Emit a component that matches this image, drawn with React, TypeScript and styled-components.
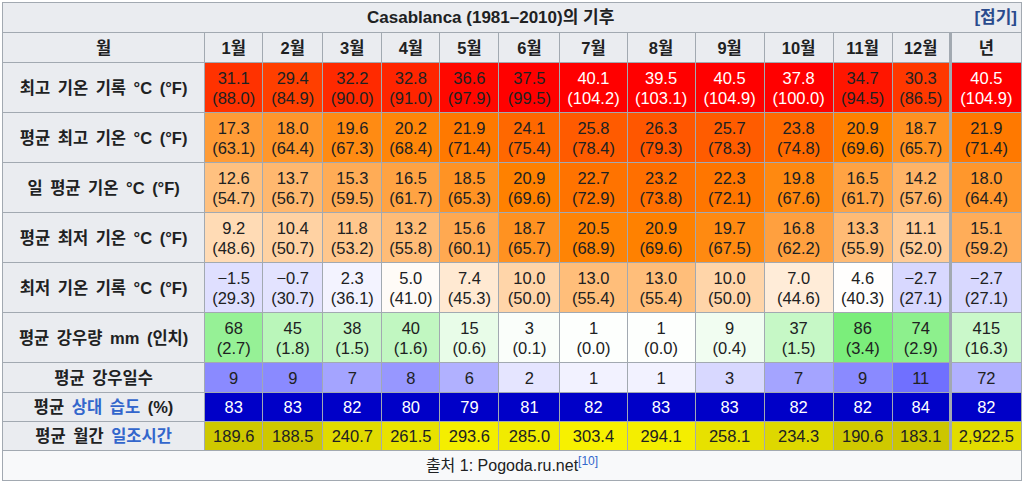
import React from 'react';
import styled, { createGlobalStyle } from 'styled-components';

const GlobalStyle = createGlobalStyle`
  body {
    margin: 0;
    padding: 2px 2px 0 2px;
    background: #ffffff;
    font-family: 'Liberation Sans', 'Noto Sans CJK KR', sans-serif;
    color: #202122;
  }
`;

const months = ['1월', '2월', '3월', '4월', '5월', '6월', '7월', '8월', '9월', '10월', '11월', '12월', '년'];
const colWidths = [202, 58, 60, 59, 58, 59, 61, 67, 68, 69, 69, 59, 58, 71];

type Pair = [string, string];

const tempRows: { label: string; values: Pair[] }[] = [
  {
    label: '최고 기온 기록 °C (°F)',
    values: [
      ['31.1', '88.0'], ['29.4', '84.9'], ['32.2', '90.0'], ['32.8', '91.0'], ['36.6', '97.9'], ['37.5', '99.5'],
      ['40.1', '104.2'], ['39.5', '103.1'], ['40.5', '104.9'], ['37.8', '100.0'], ['34.7', '94.5'], ['30.3', '86.5'],
      ['40.5', '104.9'],
    ],
  },
  {
    label: '평균 최고 기온 °C (°F)',
    values: [
      ['17.3', '63.1'], ['18.0', '64.4'], ['19.6', '67.3'], ['20.2', '68.4'], ['21.9', '71.4'], ['24.1', '75.4'],
      ['25.8', '78.4'], ['26.3', '79.3'], ['25.7', '78.3'], ['23.8', '74.8'], ['20.9', '69.6'], ['18.7', '65.7'],
      ['21.9', '71.4'],
    ],
  },
  {
    label: '일 평균 기온 °C (°F)',
    values: [
      ['12.6', '54.7'], ['13.7', '56.7'], ['15.3', '59.5'], ['16.5', '61.7'], ['18.5', '65.3'], ['20.9', '69.6'],
      ['22.7', '72.9'], ['23.2', '73.8'], ['22.3', '72.1'], ['19.8', '67.6'], ['16.5', '61.7'], ['14.2', '57.6'],
      ['18.0', '64.4'],
    ],
  },
  {
    label: '평균 최저 기온 °C (°F)',
    values: [
      ['9.2', '48.6'], ['10.4', '50.7'], ['11.8', '53.2'], ['13.2', '55.8'], ['15.6', '60.1'], ['18.7', '65.7'],
      ['20.5', '68.9'], ['20.9', '69.6'], ['19.7', '67.5'], ['16.8', '62.2'], ['13.3', '55.9'], ['11.1', '52.0'],
      ['15.1', '59.2'],
    ],
  },
  {
    label: '최저 기온 기록 °C (°F)',
    values: [
      ['−1.5', '29.3'], ['−0.7', '30.7'], ['2.3', '36.1'], ['5.0', '41.0'], ['7.4', '45.3'], ['10.0', '50.0'],
      ['13.0', '55.4'], ['13.0', '55.4'], ['10.0', '50.0'], ['7.0', '44.6'], ['4.6', '40.3'], ['−2.7', '27.1'],
      ['−2.7', '27.1'],
    ],
  },
];

const rain: Pair[] = [
  ['68', '2.7'], ['45', '1.8'], ['38', '1.5'], ['40', '1.6'], ['15', '0.6'], ['3', '0.1'],
  ['1', '0.0'], ['1', '0.0'], ['9', '0.4'], ['37', '1.5'], ['86', '3.4'], ['74', '2.9'], ['415', '16.3'],
];
const rainDays = ['9', '9', '7', '8', '6', '2', '1', '1', '3', '7', '9', '11', '72'];
const humidity = ['83', '83', '82', '80', '79', '81', '82', '83', '83', '82', '82', '84', '82'];
const sunshine = ['189.6', '188.5', '240.7', '261.5', '293.6', '285.0', '303.4', '294.1', '258.1', '234.3', '190.6', '183.1', '2,922.5'];

const num = (s: string) => parseFloat(s.replace('−', '-').replace(',', ''));
const clamp = (v: number) => Math.round(Math.max(0, Math.min(255, v)));

// Wikipedia weather box style colour ramps
const tempColor = (t: number) => {
  const r = t >= 4.5 ? 255 : (255 * (t + 42.75)) / 47.25;
  const g = t >= 4.5 ? (255 * (37.6 - t)) / 33.1 : (255 * (t + 42.75)) / 47.25;
  const b = t <= 4.5 ? 255 : (255 * (20.8 - t)) / 16.3;
  return `rgb(${clamp(r)}, ${clamp(g)}, ${clamp(b)})`;
};

const rainColor = (p: number) => {
  const rb = 255 * (1 - p / 165.6);
  return `rgb(${clamp(rb)}, ${clamp(255 - p * 0.2)}, ${clamp(rb)})`;
};

const daysColor = (d: number) => `rgb(${clamp(255 - 13 * d)}, ${clamp(255 - 13 * d)}, 255)`;

const sunColor = (h: number) => {
  const v = 132 + 0.36 * h;
  return `rgb(${clamp(v + 6)}, ${clamp(v)}, 0)`;
};

const Table = styled.table`
  border-collapse: collapse;
  table-layout: fixed;
  width: 1020px;
  background: #f8f9fa;
  border: 1px solid #a2a9b1;
  font-size: 16.5px;
  line-height: 20px;
`;

const TitleCell = styled.th`
  height: 29px;
  padding: 0 4px;
  background: #eaecf0;
  border: 1px solid #a2a9b1;
  font-weight: 700;
  font-size: 17px;
  text-align: center;
`;

const Toggle = styled.span`
  float: right;
  font-weight: 700;
  color: #2a4b8d;
`;

const HeadCell = styled.th<{ $divider?: boolean }>`
  height: 29px;
  padding: 0;
  background: #eaecf0;
  border: 1px solid #a2a9b1;
  border-left: ${(p) => (p.$divider ? '3px solid #a2a9b1' : '1px solid #a2a9b1')};
  font-weight: 700;
  text-align: center;
`;

const RowLabel = styled.th<{ $h: number }>`
  height: ${(p) => p.$h}px;
  padding: 0;
  background: #eaecf0;
  border: 1px solid #a2a9b1;
  font-weight: 700;
  text-align: center;
  white-space: nowrap;
  word-spacing: 3px;
`;

const ValueCell = styled.td<{ $bg: string; $light?: boolean; $divider?: boolean }>`
  padding: 0;
  background: ${(p) => p.$bg};
  color: ${(p) => (p.$light ? '#ffffff' : '#202122')};
  border: 1px solid #a2a9b1;
  border-left: ${(p) => (p.$divider ? '3px solid #a2a9b1' : '1px solid #a2a9b1')};
  text-align: center;
  white-space: nowrap;
`;

const Line = styled.div`
  display: block;
`;

const Link = styled.span`
  color: #3366cc;
`;

const CaptionCell = styled.td`
  height: 29px;
  padding: 0;
  background: #f8f9fa;
  border: 1px solid #a2a9b1;
  text-align: center;
  font-size: 16px;
`;

const Ref = styled.sup`
  color: #3366cc;
  font-size: 12px;
  line-height: 0;
  vertical-align: 6px;
`;

export default function App() {
  return (
    <>
      <GlobalStyle />
      <Table>
        <colgroup>
          {colWidths.map((w, i) => (
            <col key={i} style={{ width: w }} />
          ))}
        </colgroup>
        <tbody>
          <tr>
            <TitleCell colSpan={14}>
              <Toggle>[접기]</Toggle>
              Casablanca (1981–2010)의 기후
            </TitleCell>
          </tr>
          <tr>
            <HeadCell>월</HeadCell>
            {months.map((m, i) => (
              <HeadCell key={m} $divider={i === 12}>
                {m}
              </HeadCell>
            ))}
          </tr>
          {tempRows.map((row) => (
            <tr key={row.label}>
              <RowLabel $h={49}>{row.label}</RowLabel>
              {row.values.map(([c, f], i) => {
                const t = num(c);
                return (
                  <ValueCell key={i} $bg={tempColor(t)} $light={t > 37.6} $divider={i === 12}>
                    <Line>{c}</Line>
                    <Line>({f})</Line>
                  </ValueCell>
                );
              })}
            </tr>
          ))}
          <tr>
            <RowLabel $h={49}>평균 강우량 mm (인치)</RowLabel>
            {rain.map(([mm, inch], i) => (
              <ValueCell key={i} $bg={rainColor(i === 12 ? num(mm) / 12 : num(mm))} $divider={i === 12}>
                <Line>{mm}</Line>
                <Line>({inch})</Line>
              </ValueCell>
            ))}
          </tr>
          <tr>
            <RowLabel $h={29}>평균 강우일수</RowLabel>
            {rainDays.map((d, i) => (
              <ValueCell key={i} $bg={daysColor(i === 12 ? num(d) / 12 : num(d))} $divider={i === 12}>
                {d}
              </ValueCell>
            ))}
          </tr>
          <tr>
            <RowLabel $h={28}>
              평균 <Link>상대 습도</Link> (%)
            </RowLabel>
            {humidity.map((h, i) => (
              <ValueCell key={i} $bg="rgb(0, 0, 200)" $light $divider={i === 12}>
                {h}
              </ValueCell>
            ))}
          </tr>
          <tr>
            <RowLabel $h={28}>
              평균 월간 <Link>일조시간</Link>
            </RowLabel>
            {sunshine.map((s, i) => (
              <ValueCell key={i} $bg={sunColor(i === 12 ? num(s) / 12 : num(s))} $divider={i === 12}>
                {s}
              </ValueCell>
            ))}
          </tr>
          <tr>
            <CaptionCell colSpan={14}>
              출처 1: Pogoda.ru.net<Ref>[10]</Ref>
            </CaptionCell>
          </tr>
        </tbody>
      </Table>
    </>
  );
}
